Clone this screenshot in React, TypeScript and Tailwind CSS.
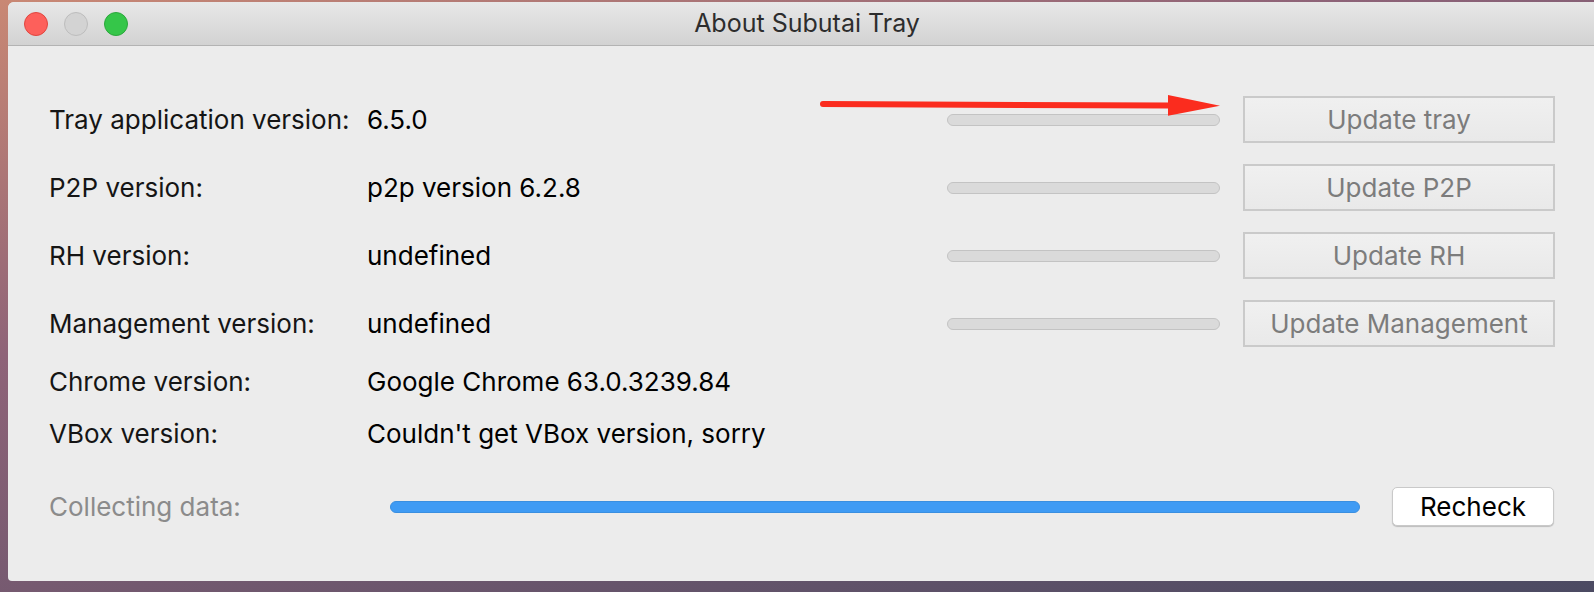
import React from "react";

interface VersionRow {
  label: string;
  value: string;
  action?: string;
}

const rows: VersionRow[] = [
  { label: "Tray application version:", value: "6.5.0", action: "Update tray" },
  { label: "P2P version:", value: "p2p version 6.2.8", action: "Update P2P" },
  { label: "RH version:", value: "undefined", action: "Update RH" },
  { label: "Management version:", value: "undefined", action: "Update Management" },
  { label: "Chrome version:", value: "Google Chrome 63.0.3239.84" },
  { label: "VBox version:", value: "Couldn't get VBox version, sorry" },
];

function TitleBar() {
  return (
    <div className="relative flex h-[44px] shrink-0 items-center border-b border-[#b3b3b3] bg-[linear-gradient(to_bottom,#e8e8e8,#d2d2d2)] pl-[16px]">
      <div className="flex gap-[16px]">
        <span className="h-[24px] w-[24px] rounded-full border border-[#e0463f] bg-[#fd605b]" />
        <span className="h-[24px] w-[24px] rounded-full border border-[#bdbdbd] bg-[#d3d3d3]" />
        <span className="h-[24px] w-[24px] rounded-full border border-[#2ba73c] bg-[#35c649]" />
      </div>
      <div className="absolute inset-0 flex items-center justify-center text-[25px] text-[#2d2d2d]">
        About Subutai Tray
      </div>
    </div>
  );
}

function Row({ row }: { row: VersionRow }) {
  if (!row.action) {
    return (
      <div className="mt-[19px] flex h-[30px] items-center [&+&]:mt-[22px]">
        <div className="w-[318px] shrink-0 text-[#151515]">{row.label}</div>
        <div className="text-black">{row.value}</div>
      </div>
    );
  }
  return (
    <div className="mt-[21px] flex h-[47px] items-center first:mt-0">
      <div className="w-[318px] shrink-0 text-[#151515]">{row.label}</div>
      <div className="flex-1 text-black">{row.value}</div>
      <div className="h-[12px] w-[273px] rounded-full border border-[#c3c3c3] bg-[#dadada]" />
      <button className="ml-[23px] flex h-[47px] w-[312px] items-center justify-center border-2 border-[#cacaca] bg-[linear-gradient(to_bottom,#f0f0f0,#e9e9e9)] text-[#7c7c7c]">
        {row.action}
      </button>
    </div>
  );
}

export default function App() {
  return (
    <div
      className="relative h-[592px] w-full overflow-hidden bg-[linear-gradient(165deg,#c98874_0%,#8e6378_35%,#4b4a62_100%)]"
      style={{ fontFamily: "Inter, 'Noto Sans', sans-serif" }}
    >
      <div className="ml-[8px] mt-[2px] flex h-[579px] w-[1598px] flex-col overflow-hidden rounded-t-[6px] rounded-b-[4px] bg-[#ececec] text-[26px]">
        <TitleBar />
        <div className="flex flex-col pl-[41px] pr-[51px] pt-[50px]">
          {rows.map((row) => (
            <Row key={row.label} row={row} />
          ))}

          <div className="mt-[39px] flex h-[39px] items-center">
            <div className="w-[341px] shrink-0 text-[#8b8b8b]">Collecting data:</div>
            <div className="h-[12px] w-[970px] rounded-full border border-[#3a8fe0] bg-[#3f9bf4]" />
            <button className="ml-[32px] flex h-[39px] w-[162px] items-center justify-center rounded-[5px] border border-[#c9c9c9] bg-white text-black shadow-[0_1px_1px_rgba(0,0,0,0.2)]">
              Recheck
            </button>
          </div>
        </div>
      </div>

      {/* red arrow drawn over the screenshot */}
      <svg
        className="absolute left-[818px] top-[92px]"
        width="404"
        height="26"
        viewBox="0 0 404 26"
      >
        <line x1="5" y1="12" x2="352" y2="13.6" stroke="#fb2c1e" strokeWidth="6" strokeLinecap="round" />
        <polygon points="350,3 402,13.7 350,23.7" fill="#fb2c1e" />
      </svg>
    </div>
  );
}
